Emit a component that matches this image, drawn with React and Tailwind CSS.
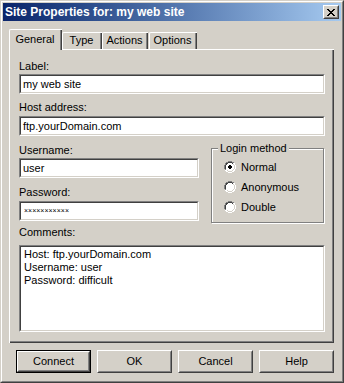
import React from "react";

const FONT = { fontFamily: '"Liberation Sans", Arial, sans-serif' };

function Sunken({ className = "", children }) {
  return (
    <div className={`border border-t-[#808080] border-l-[#808080] border-b-white border-r-white ${className}`}>
      <div className="h-full w-full border border-t-[#404040] border-l-[#404040] border-b-[#d4d0c8] border-r-[#d4d0c8] bg-white">
        {children}
      </div>
    </div>
  );
}

function Input({ value, className = "", small }) {
  return (
    <Sunken className={`h-[20px] ${className}`}>
      {small ? (
        <div className="flex h-full items-center pl-[3px] text-[7px] leading-[8px] text-black whitespace-nowrap">{value}</div>
      ) : (
        <div className="pl-[2px] text-[11px] leading-[16px] text-black whitespace-nowrap">{value}</div>
      )}
    </Sunken>
  );
}

function Button({ label, def }) {
  const inner = (
    <div className="h-full w-full border border-t-white border-l-white border-b-[#404040] border-r-[#404040]">
      <div className="flex h-full w-full items-center justify-center border border-t-[#d4d0c8] border-l-[#d4d0c8] border-b-[#808080] border-r-[#808080] text-[11px] text-black">
        {label}
      </div>
    </div>
  );
  return (
    <div className={`h-[23px] w-[75px] ${def ? "border border-black" : ""}`}>{inner}</div>
  );
}

function Radio({ checked, label }) {
  return (
    <div className="flex h-[20px] items-center">
      <svg width="12" height="12" viewBox="0 0 12 12" className="ml-[12px] shrink-0">
        <path d="M4 0h4v1h2v1h1v2h1v4h-1v2h-1v1H8v1H4v-1H2v-1H1V8H0V4h1V2h1V1h2z" fill="#ffffff" />
        <path d="M4 0h4v1H4zM2 1h2v1H2zM8 1h2v1H8zM1 2h1v2H1zM0 4h1v4H0zM1 8h1v1H1z" fill="#808080" />
        <path d="M4 1h4v1H4zM2 2h2v1H2zM8 2h1v1H8zM2 3h1v1H2zM1 4h1v4H1z" fill="#404040" />
        <path d="M10 2h1v2h-1zM11 4h1v4h-1zM10 8h1v2h-1zM8 10h2v1H8zM4 11h4v1H4zM2 10h2v1H2z" fill="#ffffff" />
        <path d="M9 3h1v1H9zM10 4h1v4h-1zM9 8h1v1H9zM8 9h1v1H8zM4 10h4v1H4zM3 9h1v1H3z" fill="#d4d0c8" />
        <path d="M2 4h8v4H2zM3 3h6v6H3zM4 2h4v8H4z" fill="#ffffff" />
        {checked && <path d="M5 4h2v1h1v2H7v1H5V7H4V5h1z" fill="#000000" />}
      </svg>
      <span className="ml-[5px] text-[11px] leading-[13px] text-black">{label}</span>
    </div>
  );
}

function Tab({ label, selected, width }) {
  if (selected) {
    return (
      <div
        className="relative z-10 -mb-[1px] flex h-[21px] flex-col rounded-tl-[2px] border-l border-t border-l-white border-t-white bg-[#d4d0c8]"
        style={{ width }}
      >
        <div className="flex h-full border-r border-r-[#404040]">
          <div className="flex flex-1 items-start justify-center border-r border-r-[#808080] pt-[3px] text-[11px] leading-[13px] text-black">
            {label}
          </div>
        </div>
      </div>
    );
  }
  return (
    <div
      className="flex h-[17px] rounded-tl-[2px] border-l border-t border-l-white border-t-white bg-[#d4d0c8]"
      style={{ width }}
    >
      <div className="flex h-full flex-1 border-r border-r-[#404040]">
        <div className="flex flex-1 items-start justify-center border-r border-r-[#808080] pt-[1px] text-[11px] leading-[13px] text-black">
          {label}
        </div>
      </div>
    </div>
  );
}

export default function App() {
  return (
    <div style={FONT} className="h-[383px] w-[344px] bg-[#d4d0c8]">
      <div className="h-full w-full border border-t-[#d4d0c8] border-l-[#d4d0c8] border-b-[#404040] border-r-[#404040]">
        <div className="flex h-full w-full flex-col border border-t-white border-l-white border-b-[#808080] border-r-[#808080] p-[1px]">
          {/* Title bar */}
          <div className="flex h-[18px] items-center bg-gradient-to-r from-[#0a246a] to-[#a6caf0] pl-[2px] pr-[2px]">
            <span className="text-[12px] font-bold leading-[14px] text-white">Site Properties for: my web site</span>
            <div className="ml-auto h-[14px] w-[16px] border border-t-white border-l-white border-b-[#404040] border-r-[#404040]">
              <div className="flex h-full w-full items-center justify-center border border-t-[#d4d0c8] border-l-[#d4d0c8] border-b-[#808080] border-r-[#808080] bg-[#d4d0c8]">
                <svg width="8" height="7" viewBox="0 0 8 7">
                  <path d="M0 0h2v1h1v1h2V1h1V0h2v1H7v1H6v1H5v1h1v1h1v1h1v1H6V6H5V5H3v1H2v1H0V6h1V5h1V4h1V3H2V2H1V1H0z" fill="#000" />
                </svg>
              </div>
            </div>
          </div>

          {/* Tabs */}
          <div className="ml-[6px] mt-[8px] flex h-[20px] items-end">
            <Tab label="General" selected width={53} />
            <Tab label="Type" width={40} />
            <Tab label="Actions" width={46} />
            <div className="w-[1px]" />
            <Tab label="Options" width={48} />
          </div>

          {/* Panel */}
          <div className="ml-[6px] h-[294px] w-[325px] border-l border-t border-l-white border-t-white">
            <div className="h-full w-full border-b border-r border-b-[#404040] border-r-[#404040]">
              <div className="flex h-full w-full flex-col border-b border-r border-b-[#808080] border-r-[#808080] pl-[9px] pr-[7px]">
                <div className="mt-[10px] text-[11px] leading-[13px] text-black">Label:</div>
                <Input value="my web site" className="mt-[1px] w-[306px]" />
                <div className="mt-[7px] text-[11px] leading-[13px] text-black">Host address:</div>
                <Input value="ftp.yourDomain.com" className="mt-[2px] w-[306px]" />

                <div className="flex">
                  <div className="flex w-[180px] flex-col">
                    <div className="mt-[8px] text-[11px] leading-[13px] text-black">Username:</div>
                    <Input value="user" className="mt-[1px] w-[180px]" />
                    <div className="mt-[8px] text-[11px] leading-[13px] text-black">Password:</div>
                    <Input value="×××××××××××" small className="mt-[2px] w-[180px]" />
                  </div>
                  <div className="relative ml-[12px] mt-[12px] h-[75px] w-[113px] border border-[#808080] shadow-[inset_1px_1px_0_#ffffff,1px_1px_0_#ffffff]">
                    <span className="absolute -top-[7px] left-[6px] bg-[#d4d0c8] px-[2px] text-[11px] leading-[13px] text-black">
                      Login method
                    </span>
                    <div className="mt-[8px] flex flex-col">
                      <Radio checked label="Normal" />
                      <Radio label="Anonymous" />
                      <Radio label="Double" />
                    </div>
                  </div>
                </div>

                <div className="mt-[3px] text-[11px] leading-[13px] text-black">Comments:</div>
                <Sunken className="mt-[6px] h-[87px] w-[306px]">
                  <div className="pl-[3px] pt-[1px] text-[11px] leading-[13px] text-black">
                    <div>Host: ftp.yourDomain.com</div>
                    <div>Username: user</div>
                    <div>Password: difficult</div>
                  </div>
                </Sunken>
              </div>
            </div>
          </div>

          {/* Buttons */}
          <div className="ml-[13px] mt-[7px] flex gap-[6px]">
            <Button label="Connect" def />
            <Button label="OK" />
            <Button label="Cancel" />
            <Button label="Help" />
          </div>
        </div>
      </div>
    </div>
  );
}
